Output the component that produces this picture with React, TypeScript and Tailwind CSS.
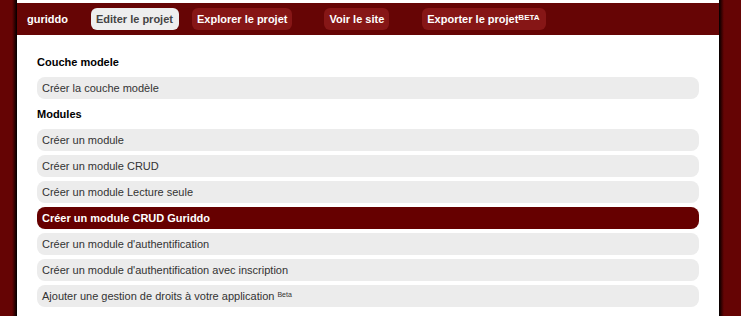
export default function App() {
  const font = { fontFamily: '"Liberation Sans", Arial, sans-serif' };
  const items: { label: string; active?: boolean; beta?: boolean; heading?: boolean }[] = [
    { label: "Couche modele", heading: true },
    { label: "Créer la couche modèle" },
    { label: "Modules", heading: true },
    { label: "Créer un module" },
    { label: "Créer un module CRUD" },
    { label: "Créer un module Lecture seule" },
    { label: "Créer un module CRUD Guriddo", active: true },
    { label: "Créer un module d'authentification" },
    { label: "Créer un module d'authentification avec inscription" },
    { label: "Ajouter une gestion de droits à votre application", beta: true },
  ];
  return (
    <div className="flex w-[741px] h-[316px] overflow-hidden bg-white" style={font}>
      <div className="w-[17px] h-full bg-[linear-gradient(to_right,#650404_0px,#650404_12px,#2a0000_15px,#000_17px)]" />
      <div className="flex-1 flex flex-col bg-white">
        <div className="h-[3px]" />
        <div className="h-[32px] bg-[#660505] flex items-center pl-[10px] text-[11px] font-bold text-white">
          <span className="mr-[23px]">guriddo</span>
          <span className="h-[22px] flex items-center pl-[5px] pr-[6px] rounded-[6px] bg-[#eeeeee] text-[#444]">Editer le projet</span>
          <span className="ml-[13px] h-[22px] flex items-center px-[5px] rounded-[6px] bg-[#861616]">Explorer le projet</span>
          <span className="ml-[32px] h-[22px] flex items-center px-[5px] rounded-[6px] bg-[#861616]">Voir le site</span>
          <span className="ml-[33px] h-[22px] flex items-center pl-[5px] pr-[6px] rounded-[6px] bg-[#861616]">
            Exporter le projet<sup className="text-[8px] relative -top-[1px]">BETA</sup>
          </span>
        </div>
        <div className="flex flex-col gap-[4px] pt-[16px] pl-[20px] pr-[20px]">
          {items.map((it) =>
            it.heading ? (
              <div key={it.label} className="h-[22px] flex items-center text-[11px] font-bold text-black">
                {it.label}
              </div>
            ) : (
              <div
                key={it.label}
                className={
                  it.active
                    ? "h-[22px] flex items-center px-[5px] rounded-[8px] bg-[#660000] text-white font-bold text-[11px]"
                    : "h-[22px] flex items-center px-[5px] rounded-[8px] bg-[#ececec] text-[#333] text-[11px]"
                }
              >
                {it.label}
                {it.beta && <sup className="text-[7px] ml-[3px] relative -top-[1px]">Beta</sup>}
              </div>
            )
          )}
        </div>
      </div>
      <div className="w-[22px] h-full bg-[linear-gradient(to_right,#000_0px,#2a0000_2px,#650404_5px,#650404_22px)]" />
    </div>
  );
}
